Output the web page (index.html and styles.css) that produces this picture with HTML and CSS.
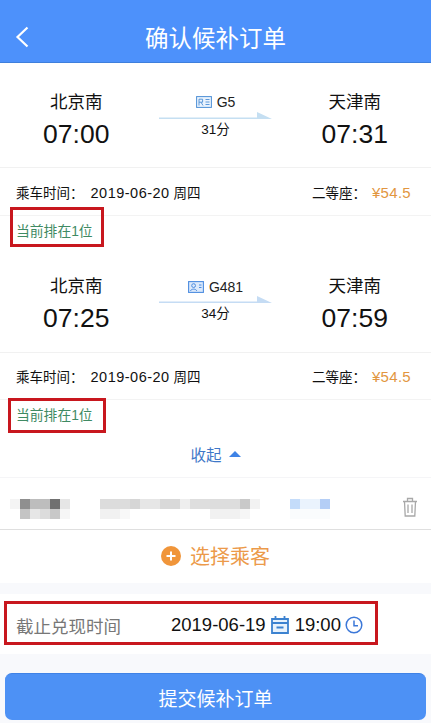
FILE: index.html
```html
<!DOCTYPE html>
<html lang="zh-CN">
<head>
<meta charset="utf-8">
<title>确认候补订单</title>
<link rel="stylesheet" href="styles.css">
</head>
<body>
<div class="page">
  <header class="topbar">
    <svg class="back" viewBox="0 0 14 22" width="14" height="22"><path d="M12.500 1.500 2.500 11l10 9.500" fill="none" stroke="#fff" stroke-width="2.200"/></svg>
    <h1 class="title">确认候补订单</h1>
  </header>

  <section class="trip trip-first">
    <div class="route">
      <div class="stop"><div class="station">北京南</div><div class="time">07:00</div></div>
      <div class="mid">
        <div class="train">
          <svg class="id-icon" viewBox="0 0 16 12" width="16" height="12"><rect x=".6" y=".6" width="14.8" height="10.8" fill="#eaf3fd" stroke="#4d8fd6" stroke-width="1"/><path d="M3 9.500V3.200h3.600v3H3M5 6.200l2 3.300M9.500 3.500h4M9.500 6h4M9.500 8.500h4" fill="none" stroke="#4d8fd6" stroke-width=".9"/></svg>
          <span>G5</span>
        </div>
        <svg class="arrow" viewBox="0 0 113 8" width="113" height="8"><path d="M0 5.500h98V0l15 7H0z" fill="#c5dff2"/></svg>
        <div class="duration">31分</div>
      </div>
      <div class="stop"><div class="station">天津南</div><div class="time">07:31</div></div>
    </div>
    <div class="meta">
      <div class="date"><span class="label">乘车时间：</span><span class="day">2019-06-20</span> <span class="week">周四</span></div>
      <div class="seat"><span class="label">二等座：</span><span class="price">¥54.5</span></div>
    </div>
    <div class="rank">当前排在1位<span class="mark mark-rank1"></span></div>
  </section>

  <section class="trip trip-second">
    <div class="route">
      <div class="stop"><div class="station">北京南</div><div class="time">07:25</div></div>
      <div class="mid">
        <div class="train">
          <svg class="id-icon" viewBox="0 0 16 12" width="16" height="12"><rect x=".6" y=".6" width="14.8" height="10.8" fill="#dbe9fb" stroke="#4d8de0" stroke-width="1.100"/><circle cx="5.600" cy="4.600" r="1.900" fill="none" stroke="#4d8de0"/><path d="M2.500 10c.4-2.500 5.800-2.500 6.200 0M11 4h2.500M11 6.500h2.500" fill="none" stroke="#4d8de0"/></svg>
          <span>G481</span>
        </div>
        <svg class="arrow" viewBox="0 0 113 8" width="113" height="8"><path d="M0 5.500h98V0l15 7H0z" fill="#c5dcf4"/></svg>
        <div class="duration">34分</div>
      </div>
      <div class="stop"><div class="station">天津南</div><div class="time">07:59</div></div>
    </div>
    <div class="meta">
      <div class="date"><span class="label">乘车时间：</span><span class="day">2019-06-20</span> <span class="week">周四</span></div>
      <div class="seat"><span class="label">二等座：</span><span class="price">¥54.5</span></div>
    </div>
    <div class="rank">当前排在1位<span class="mark mark-rank2"></span></div>
  </section>

  <div class="collapse">
    <span>收起</span>
    <svg viewBox="0 0 12 6" width="12" height="6"><path d="M6 0l6 6H0z" fill="#3f83e6"/></svg>
  </div>

  <div class="passenger">
    <svg class="mosaic" viewBox="0 0 340 20" width="340" height="20" shape-rendering="crispEdges">
      <rect x="10" y="0" width="10" height="10" fill="#f4f4f4"/>
      <rect x="20" y="0" width="10" height="10" fill="#8f8f8f"/>
      <rect x="30" y="0" width="20" height="10" fill="#bdbdbd"/>
      <rect x="50" y="0" width="10" height="10" fill="#707070"/>
      <rect x="60" y="0" width="10" height="10" fill="#e6e6e6"/>
      <rect x="20" y="10" width="10" height="10" fill="#c4c4c4"/>
      <rect x="30" y="10" width="10" height="10" fill="#e6e6e6"/>
      <rect x="40" y="10" width="10" height="10" fill="#dcdcdc"/>
      <rect x="50" y="10" width="10" height="10" fill="#c8c8c8"/>
      <rect x="60" y="10" width="10" height="10" fill="#f6f6f6"/>
      <rect x="100" y="0" width="30" height="10" fill="#dcdcdc"/>
      <rect x="130" y="0" width="10" height="10" fill="#d6d6d6"/>
      <rect x="140" y="0" width="20" height="10" fill="#e6e6e6"/>
      <rect x="160" y="0" width="20" height="10" fill="#d9d9d9"/>
      <rect x="180" y="0" width="10" height="10" fill="#eeeeee"/>
      <rect x="190" y="0" width="20" height="10" fill="#dedede"/>
      <rect x="210" y="0" width="30" height="10" fill="#dddddd"/>
      <rect x="240" y="0" width="10" height="10" fill="#c9c9c9"/>
      <rect x="250" y="0" width="10" height="10" fill="#f2f2f2"/>
      <rect x="100" y="10" width="20" height="10" fill="#f1f1f1"/>
      <rect x="120" y="10" width="10" height="10" fill="#f8f8f8"/>
      <rect x="210" y="10" width="30" height="10" fill="#f1f1f1"/>
      <rect x="240" y="10" width="10" height="10" fill="#f6f6f6"/>
      <rect x="290" y="0" width="10" height="10" fill="#c4dcfa"/>
      <rect x="300" y="0" width="20" height="10" fill="#eaf3fd"/>
      <rect x="320" y="0" width="10" height="10" fill="#b4cef6"/>
      <rect x="290" y="10" width="40" height="10" fill="#fafcfd"/>
    </svg>
    <svg class="trash" viewBox="0 0 16 20" width="16" height="20"><path d="M1 4.500h14M5.500 4.500V1.500h5v3M2.500 4.500l.7 14.500h9.600l.7-14.500M6 7.500v8.500M10 7.500v8.500" fill="none" stroke="#a8a8a8" stroke-width="1.300"/></svg>
  </div>

  <div class="select">
    <svg viewBox="0 0 20 20" width="20" height="20"><circle cx="10" cy="10" r="10" fill="#f0953a"/><path d="M10 5.500v9M5.500 10h9" stroke="#fff" stroke-width="2"/></svg>
    <span>选择乘客</span>
  </div>

  <div class="deadline">
    <span class="deadline-label">截止兑现时间</span>
    <div class="deadline-value">
      <span>2019-06-19</span>
      <svg viewBox="0 0 18 18" width="18" height="18"><path d="M1 3h16v14H1z" fill="#e8f2fc" stroke="#3c82d0" stroke-width="1.800"/><path d="M1 7h16M4.500 0v4M13.500 0v4M5.500 11.500h7" fill="none" stroke="#3c82d0" stroke-width="1.800"/></svg>
      <span class="clock-time">19:00</span>
      <svg viewBox="0 0 18 18" width="18" height="18"><circle cx="9" cy="9" r="7.800" fill="none" stroke="#3c78d8" stroke-width="1.500"/><path d="M9 4.500V9.800h4" fill="none" stroke="#3c78d8" stroke-width="1.500"/></svg>
    </div>
    <span class="mark mark-deadline"></span>
  </div>

  <div class="footer">
    <button class="submit" type="button">提交候补订单</button>
  </div>
</div>
</body>
</html>
```

FILE: styles.css
```css
* { box-sizing: border-box; }
html, body { margin: 0; padding: 0; }
body {
  width: 431px;
  height: 723px;
  overflow: hidden;
  background: #f8f9fc;
  color: #111;
  font-family: "Liberation Sans", "Noto Sans CJK SC", sans-serif;
}
.page { display: flex; flex-direction: column; height: 723px; }
.page > * { flex-shrink: 0; }

.topbar {
  position: relative;
  display: flex;
  align-items: center;
  justify-content: center;
  height: 63px;
  padding-top: 11px;
  background: #4d91fb;
  border-bottom: 1px solid #3f7fdc;
}
.back { position: absolute; left: 15px; top: 26px; }
.title { margin: 0; font-size: 23.500px; font-weight: 400; color: #fff; }

.trip { background: #fff; }
.route {
  display: grid;
  grid-template-columns: 1fr 126px 1fr;
  height: 105px;
  border-bottom: 1px solid #f1f1f1;
}
.stop { display: flex; flex-direction: column; align-items: center; padding-top: 27px; }
.station { font-size: 17.500px; line-height: 24px; }
.time { font-size: 26.500px; line-height: 30px; margin-top: 5px; }
.mid { display: flex; flex-direction: column; align-items: center; padding-top: 30px; }
.train { display: flex; align-items: center; gap: 5px; font-size: 14px; line-height: 18px; color: #222; }
.arrow { display: block; margin-top: 1px; }
.duration { font-size: 13.500px; line-height: 18px; margin-top: 1px; }

.trip-second .route { height: 91px; }
.trip-second .stop { padding-top: 12px; }
.trip-second .mid { padding-top: 16px; }
.trip-second .arrow { margin-top: 0; }
.trip-second .meta { height: 47px; }

.meta {
  display: flex;
  justify-content: space-between;
  align-items: center;
  height: 48px;
  padding: 0 20px 0 16px;
  font-size: 13.500px;
  border-bottom: 1px solid #f3f3f3;
}
.label { display: inline-block; margin-right: 6px; }
.date .label { margin-right: 7px; }
.day { font-size: 14.500px; letter-spacing: .5px; }
.price { color: #e2963f; font-size: 15px; letter-spacing: .3px; }

.rank {
  position: relative;
  height: 46px;
  padding: 7px 0 0 16px;
  font-size: 13.800px;
  line-height: 18px;
  color: #3f8a63;
}
.trip-second .rank { height: 37px; }
.mark { position: absolute; border: 3px solid #c8171e; pointer-events: none; }
.mark-rank1 { left: 10px; top: -9px; width: 94px; height: 40px; }
.mark-rank2 { left: 8px; top: -2px; width: 98px; height: 35px; }

.collapse {
  display: flex;
  align-items: center;
  justify-content: center;
  gap: 7px;
  height: 41px;
  padding-bottom: 6px;
  font-size: 15.500px;
  color: #3f78c8;
  background: #fff;
  border-bottom: 1px solid #f5f5f7;
}

.passenger {
  display: flex;
  align-items: flex-start;
  justify-content: space-between;
  height: 52px;
  padding: 21px 13px 0 0;
  background: #fff;
  border-bottom: 1px solid #dfdfdf;
}
.trash { margin-top: -2px; }
.mosaic { display: block; }

.select {
  display: flex;
  align-items: center;
  justify-content: center;
  gap: 9px;
  height: 53px;
  padding-bottom: 2px;
  font-size: 20px;
  color: #ec9a4a;
  background: #fff;
}

.deadline {
  position: relative;
  display: flex;
  align-items: center;
  height: 60px;
  margin-top: 11px;
  padding: 2px 0 0 16px;
  background: #fff;
}
.deadline-label { width: 155px; font-size: 17.500px; color: #777; }
.deadline-value { display: flex; align-items: center; gap: 5px; font-size: 18.500px; color: #111; }
.clock-time { margin-left: 1px; }
.clock-time + svg { margin-left: -1px; }
.mark-deadline { left: 4px; top: 7px; width: 374px; height: 44px; }

.footer { padding: 19px 5px 3px; }
.submit {
  display: block;
  width: 100%;
  height: 47px;
  border: 0;
  border-top: 1px solid #3f82e6;
  border-radius: 7px;
  background: #4d91f5;
  color: #fff;
  font: inherit;
  font-size: 19px;
}
```
